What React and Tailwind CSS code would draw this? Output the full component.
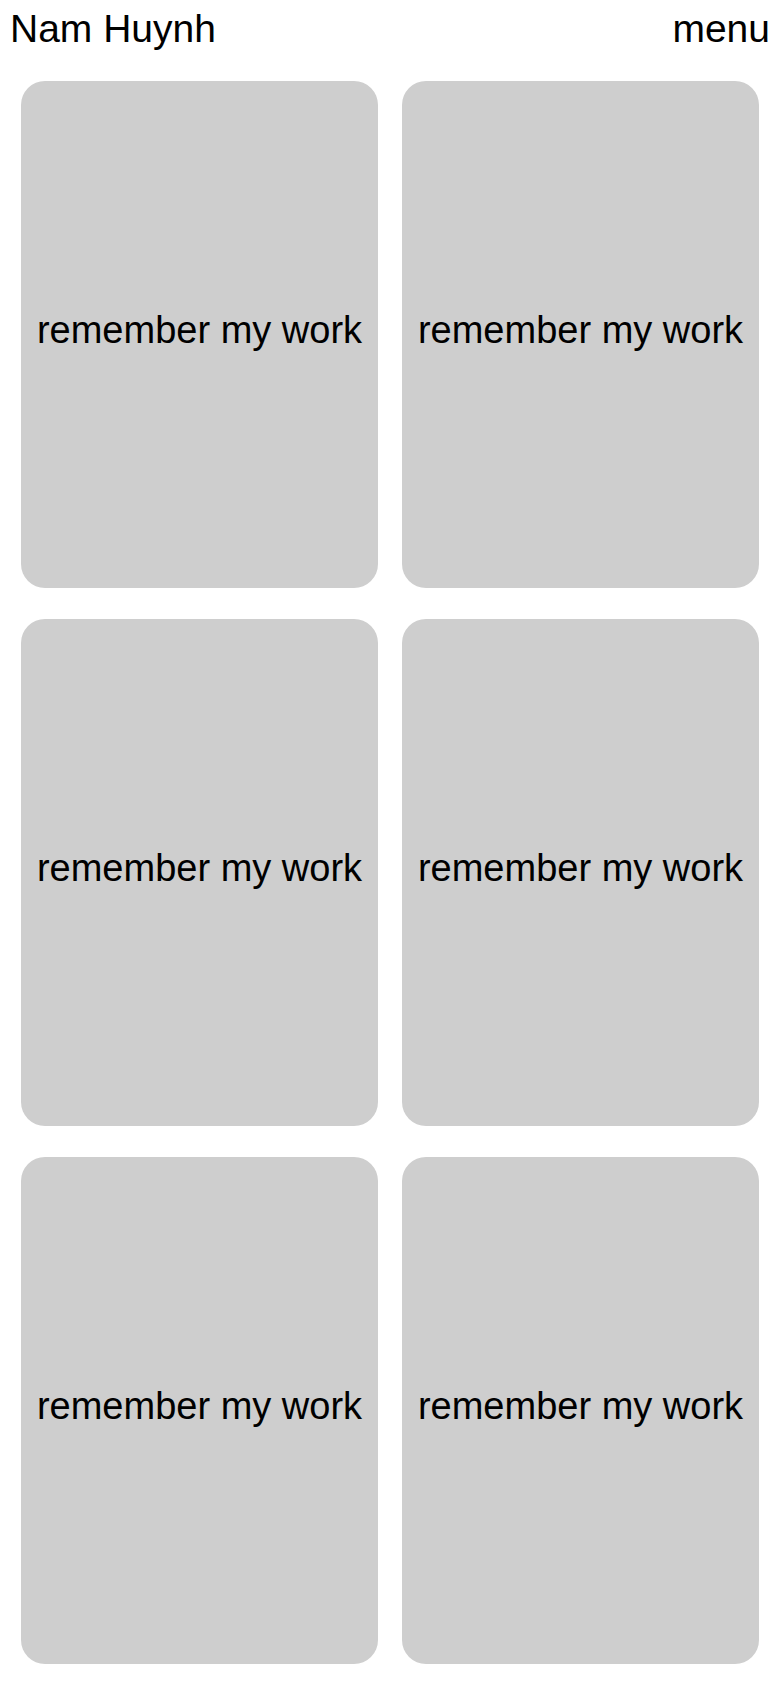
import React from 'react';

const cards = [1, 2, 3, 4, 5, 6];

export default function App() {
  return (
    <div className="min-h-screen bg-white text-black font-['Liberation_Sans',Arial,sans-serif]">
      {/* Header */}
      <header className="flex items-start justify-between px-[10px] pt-[10px] text-[39px] leading-[38px]">
        <div>Nam Huynh</div>
        <div>menu</div>
      </header>

      {/* Work grid */}
      <main className="mt-[33px] grid grid-cols-2 gap-x-6 gap-y-[31px] px-[21px] pb-[26px]">
        {cards.map((n) => (
          <div
            key={n}
            className="flex h-[507px] items-center justify-center rounded-3xl bg-[#cecece] pb-[9px] text-[38px] leading-none whitespace-nowrap"
          >
            remember my work
          </div>
        ))}
      </main>
    </div>
  );
}
